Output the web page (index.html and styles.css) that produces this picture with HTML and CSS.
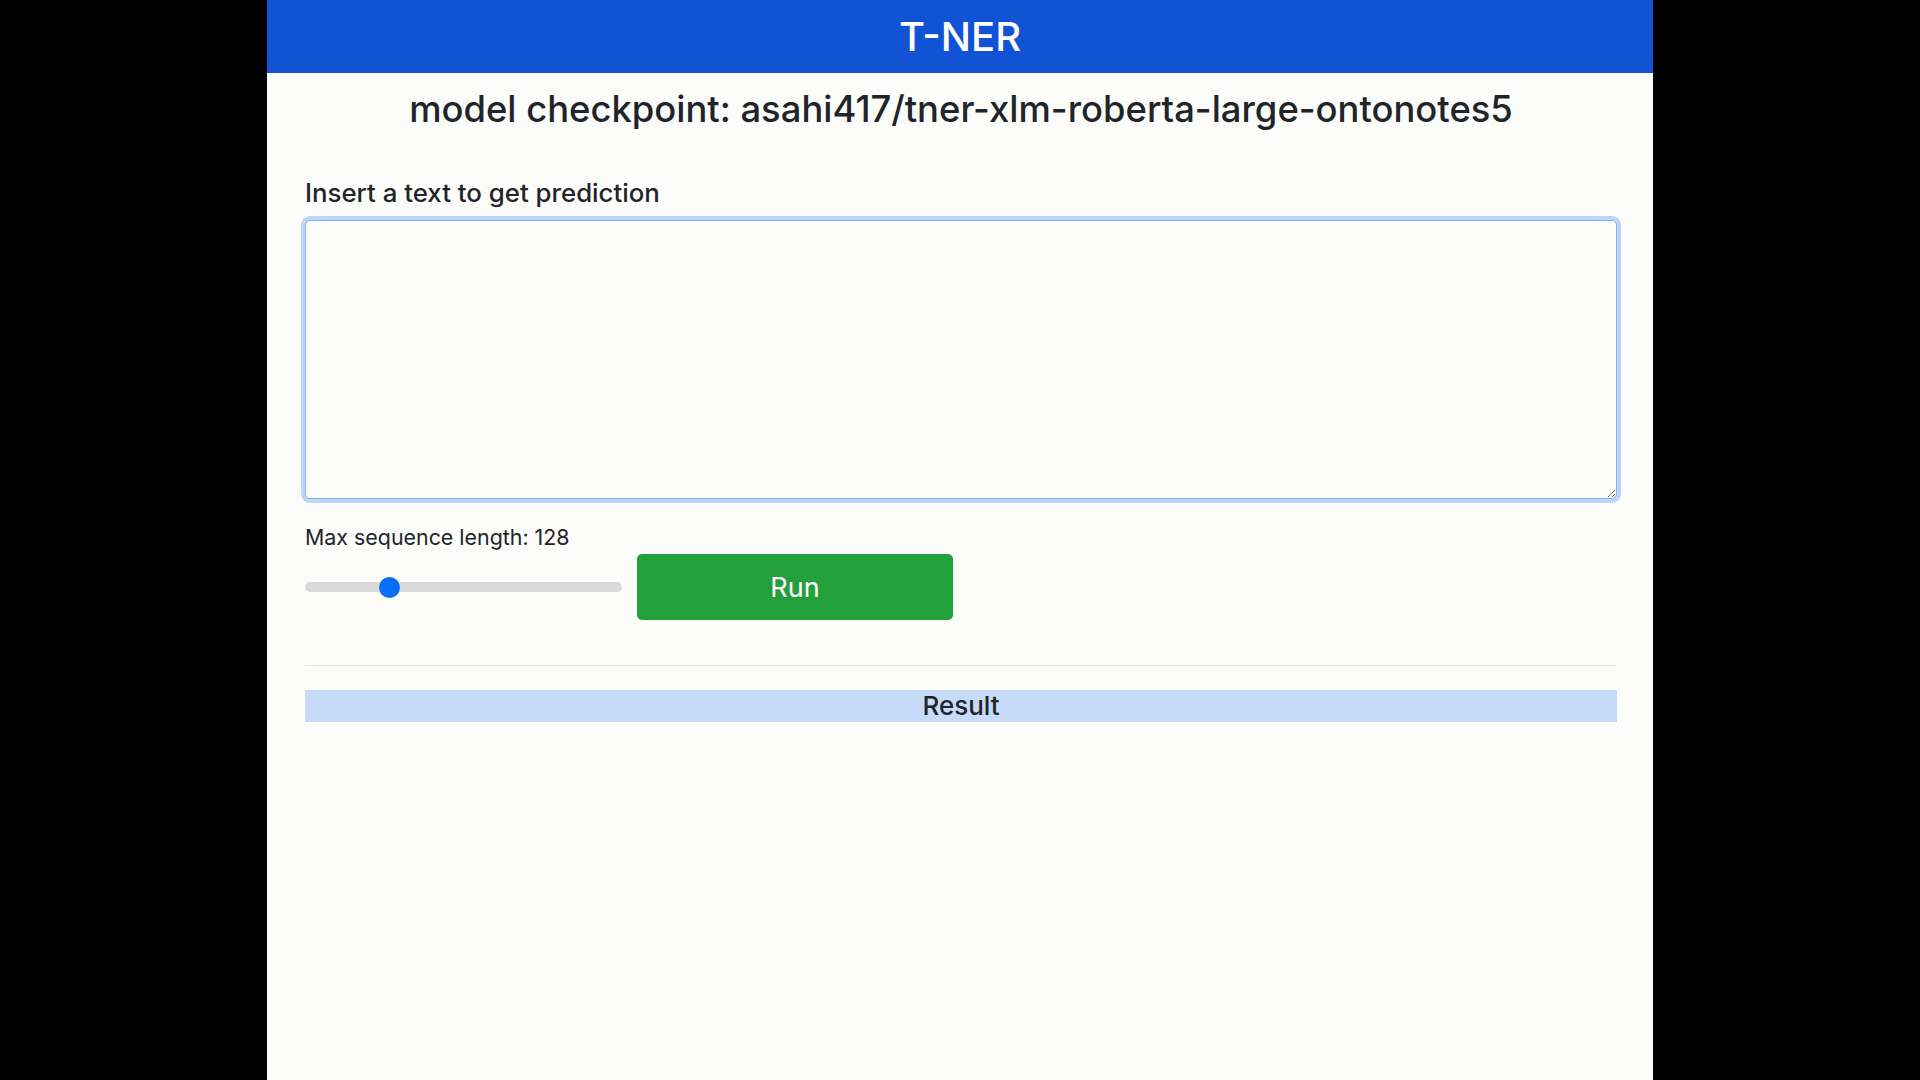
FILE: index.html
```html
<!DOCTYPE html>
<html lang="en">
<head>
<meta charset="utf-8">
<title>T-NER</title>
<link rel="stylesheet" href="styles.css">
</head>
<body>
<div class="page">
  <header class="topbar"><h1 class="brand">T-NER</h1></header>
  <main class="content">
    <h2 class="checkpoint">model checkpoint: asahi417/tner-xlm-roberta-large-ontonotes5</h2>
    <label class="input-label" for="text">Insert a text to get prediction</label>
    <textarea id="text" class="text-input" autofocus></textarea>
    <div class="seq-label">Max sequence length: <span>128</span></div>
    <div class="controls">
      <input class="range" type="range" min="0" max="512" value="128">
      <button class="run-btn" type="button">Run</button>
    </div>
    <hr class="divider">
    <div class="result-bar">Result</div>
  </main>
</div>
</body>
</html>
```
FILE: styles.css
```css
* { box-sizing: border-box; }
html, body { margin: 0; padding: 0; }
body {
  background: #000;
  font-family: "Inter", "Roboto", "Liberation Sans", sans-serif;
  color: #212529;
}
.page {
  width: 1386px;
  min-height: 100vh;
  margin: 0 auto;
  background: #fcfcfa;
}
.topbar {
  height: 73px;
  background: #1253d6;
  display: flex;
  align-items: center;
  justify-content: center;
}
.brand {
  margin: 0;
  color: #fff;
  font-size: 40px;
  font-weight: 500;
  line-height: 1;
}
.content {
  padding: 0 36px 0 38px;
  display: flex;
  flex-direction: column;
}
.checkpoint {
  margin: 15px 0 0;
  font-size: 36.4px;
  line-height: 42px;
  font-weight: 500;
  text-align: center;
}
.input-label {
  margin-top: 48px;
  font-size: 25.8px;
  line-height: 30px;
  font-weight: 500;
}
.text-input {
  margin-top: 12px;
  width: 100%;
  height: 279px;
  border: 1px solid #80b3f0;
  border-radius: 5px;
  background: #fcfcfa;
  box-shadow: 0 0 0 4px #bdd6f7;
  outline: none;
  resize: vertical;
  font-family: inherit;
  font-size: 20px;
  padding: 8px 12px;
}
.seq-label {
  margin-top: 26px;
  font-size: 21.4px;
  line-height: 25px;
}
.controls {
  margin-top: 4px;
  display: flex;
  align-items: center;
  gap: 15px;
  height: 66px;
}
.range {
  -webkit-appearance: none;
  appearance: none;
  width: 317px;
  height: 22px;
  margin: 0;
  background: transparent;
}
.range::-webkit-slider-runnable-track {
  height: 10px;
  background: #d9d9d9;
  border-radius: 5px;
}
.range::-webkit-slider-thumb {
  -webkit-appearance: none;
  appearance: none;
  width: 21px;
  height: 21px;
  margin-top: -5.5px;
  border: 0;
  border-radius: 50%;
  background: #0a6ff7;
}
.run-btn {
  width: 316px;
  height: 66px;
  border: 0;
  border-radius: 5px;
  background: #22a03b;
  color: #fff;
  font-family: inherit;
  font-size: 27px;
  font-weight: 400;
}
.divider {
  margin: 45px 0 0;
  border: 0;
  border-top: 1px solid #e4e4e0;
}
.result-bar {
  margin-top: 24px;
  height: 32px;
  background: #c6dbf8;
  text-align: center;
  font-size: 26px;
  line-height: 32px;
  font-weight: 500;
}
```
